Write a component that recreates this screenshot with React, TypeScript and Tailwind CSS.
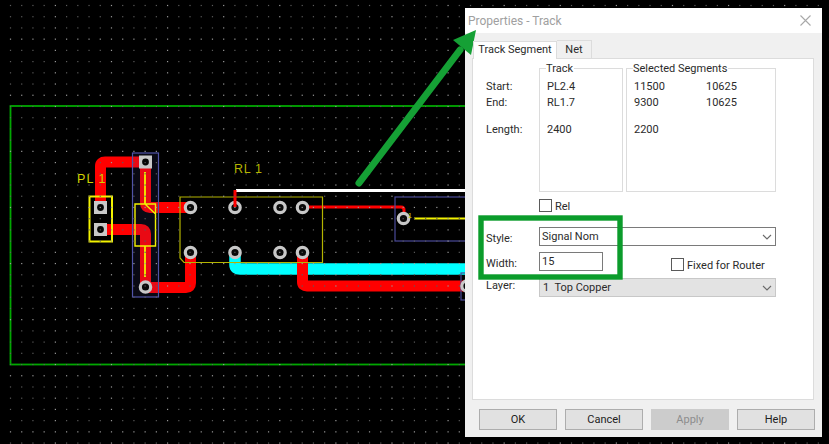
const xs = Array.from({ length: 75 }, (_, i) => i);
const ys = Array.from({ length: 40 }, (_, i) => i);

function Pad({ x, y }: { x: number; y: number }) {
  return (
    <g>
      <circle cx={x} cy={y} r={5.2} fill="#0a0a0a" stroke="#c8c8c8" strokeWidth={3.2} />
    </g>
  );
}

function SquarePad({ x, y }: { x: number; y: number }) {
  return (
    <g>
      <rect x={x - 6.5} y={y - 6.5} width={13} height={13} fill="#c8c8c8" />
      <circle cx={x} cy={y} r={3.4} fill="#050505" />
    </g>
  );
}

function Board() {
  return (
    <svg className="absolute inset-0" width={829} height={444} viewBox="0 0 829 444">
      <rect x={10.5} y={106} width={470} height={258.5} fill="none" stroke="#00a800" strokeWidth={1.8} />
      <g fill="none" strokeLinejoin="round" strokeLinecap="round">
        <path d="M235 252V265Q235 269 240 269H480" stroke="#00ffff" strokeWidth={11.5} />
        <path d="M100.5 207V166Q100.5 162 105 162H145.5V203Q145.5 207.500 150 207.500H190" stroke="#ff0000" strokeWidth={11} />
        <path d="M100.500 229.500H141Q145.500 229.500 145.500 234V287.500H186Q190.500 287.500 190.500 283V252" stroke="#ff0000" strokeWidth={11} />
        <path d="M302.500 252V282Q302.500 286 307 286H480" stroke="#ff0000" strokeWidth={11} />
        <path d="M236 190.500H480" stroke="#ffffff" strokeWidth={3} strokeLinecap="butt" />
        <path d="M302.500 207H401Q404 207 404 210V218" stroke="#ff0000" strokeWidth={3} strokeLinecap="butt" />
      </g>
      <rect x={132.500} y={153} width={26} height={144} fill="#4a4ea8" fillOpacity={0.12} stroke="#5054a8" strokeWidth={1.2} />
      <rect x={395} y={197} width={90} height={44} fill="none" stroke="#4a4a98" strokeWidth={1.2} />
      <rect x={461} y={273} width={20} height={27} fill="none" stroke="#4a4a98" strokeWidth={1.2} />
      <path d="M180 197H322.500V262.500H184L180 258Z" fill="none" stroke="#b4b400" strokeWidth={1.2} />
      <rect x={89.500} y={196.500} width={22.500} height={45} fill="none" stroke="#f2f200" strokeWidth={2} />
      <path d="M135 204H155.500V246H135ZM145 204L155.500 214" fill="none" stroke="#f2f200" strokeWidth={1.4} />
      <path d="M145 172V204M145 246V277" fill="none" stroke="#f2f200" strokeWidth={1.8} />
      <path d="M414 218.500H480" fill="none" stroke="#f2f200" strokeWidth={2} />
      <SquarePad x={100.5} y={207.5} />
      <SquarePad x={100.5} y={229.5} />
      <SquarePad x={145.5} y={162} />
      <Pad x={145.5} y={287} />
      {[190.5, 235, 280, 302.5].map((x) => (
        <g key={x}>
          <Pad x={x} y={207.500} />
          <Pad x={x} y={252.500} />
        </g>
      ))}
      <path d="M235 190V207" stroke="#ff0000" strokeWidth={3} fill="none" />
      <Pad x={403.5} y={218.5} />
      <circle cx={467} cy={286} r={5.200} fill="#0a0a0a" stroke="#c8c8c8" strokeWidth={3.2} />
      <text x={77} y={183} fill="#d2d200" fontFamily="Liberation Sans, sans-serif" fontSize={12.5} letterSpacing={1.1}>PL 1</text>
      <text x={234} y={173} fill="#b4b400" fontFamily="Liberation Sans, sans-serif" fontSize={12.5} letterSpacing={0.7}>RL 1</text>
      <text x={408} y={218} fill="#d2d200" fontFamily="Liberation Sans, sans-serif" fontSize={7}>1</text>
      {ys.map((r) =>
        xs.map((c) => {
          const bright = c % 5 === 4 || r % 5 === 3;
          return (
            <rect
              key={`${r}-${c}`}
              x={10.5 + c * 11.22 - 0.6}
              y={5.5 + r * 11.22 - 0.6}
              width={1.2}
              height={1.2}
              fill={bright ? "#9a9a9a" : "#5c5c5c"}
            />
          );
        })
      )}
    </svg>
  );
}

function Chevron() {
  return (
    <svg width={10} height={6} viewBox="0 0 10 6" className="mr-[3px]">
      <path d="M1 1L5 5L9 1" fill="none" stroke="#6a6a6a" strokeWidth={1.1} />
    </svg>
  );
}

function Group({ title, width, children }: { title: string; width: string; children: React.ReactNode }) {
  return (
    <div className={`relative h-[124px] border border-[#dcdcdc] pt-[10px] pl-[7px] ${width}`}>
      <span className="absolute -top-[8px] left-[6px] bg-[#ffffff] pr-px leading-4">{title}</span>
      {children}
    </div>
  );
}

function Check({ label, className }: { label: string; className?: string }) {
  return (
    <div className={`flex h-[13px] items-center gap-[3px] leading-[13px] ${className ?? ""}`}>
      <span className="h-[13px] w-[13px] border border-[#5a5a5a] bg-white" />
      <span className="pt-px">{label}</span>
    </div>
  );
}

function Btn({ label, disabled }: { label: string; disabled?: boolean }) {
  return (
    <div
      className={`flex h-[21px] w-[78px] items-center justify-center border pt-px ${
        disabled ? "border-[#cccccc] bg-[#cccccc] text-[#8c8c8c]" : "border-[#adadad] bg-[#e1e1e1] text-[#222222]"
      }`}
    >
      {label}
    </div>
  );
}

function Dialog() {
  return (
    <div className="absolute left-[465px] top-[8px] flex h-[429px] w-[357px] flex-col bg-[#f0f0f0] text-[11px] text-[#2b2b2b] [font-family:'Roboto',sans-serif]">
      <div className="flex h-[25px] items-center justify-between bg-white pl-[3px] pr-[11px] text-[12px] text-[#a0a0a0]">
        <span>Properties - Track</span>
        <svg width={11} height={11} viewBox="0 0 11 11">
          <path d="M0.500 0.500L10.500 10.500M10.500 0.500L0.500 10.500" stroke="#a8a8a8" strokeWidth={1.1} />
        </svg>
      </div>
      <div className="flex h-[25px] items-end pl-[8px]">
        <div className="z-10 -mb-px flex h-[18px] w-[84px] items-center justify-center border border-b-0 border-[#dcdcdc] bg-white">
          Track Segment
        </div>
        <div className="flex h-[18px] w-[35px] items-center justify-center border border-l-0 border-b-0 border-[#dcdcdc] bg-[#f0f0f0] pt-px">
          Net
        </div>
      </div>
      <div className="ml-[7px] flex h-[342px] w-[342px] flex-col border border-[#dcdcdc] bg-white pl-[13px]">
        <div className="mt-[9px] flex">
          <div className="w-[53px] pt-[11px] leading-4">
            <div>Start:</div>
            <div>End:</div>
            <div className="mt-[11px]">Length:</div>
          </div>
          <Group title="Track" width="w-[84px]">
            <div className="leading-4">
              <div>PL2.4</div>
              <div>RL1.7</div>
              <div className="mt-[11px]">2400</div>
            </div>
          </Group>
          <Group title="Selected Segments" width="ml-[3px] w-[150px]">
            <div className="grid grid-cols-[72px_1fr] leading-4">
              <div>11500</div>
              <div>10625</div>
              <div>9300</div>
              <div>10625</div>
              <div className="mt-[11px]">2200</div>
            </div>
          </Group>
        </div>
        <Check label="Rel" className="ml-[53px] mt-[7px]" />
        <div className="mt-[15px] flex h-[19px] items-center leading-4">
          <div className="w-[53px] translate-y-[2px]">Style:</div>
          <div className="flex h-[19px] w-[237px] items-center justify-between border border-[#7a7a7a] bg-white pl-[2px]">
            <span>Signal Nom</span>
            <Chevron />
          </div>
        </div>
        <div className="mt-[6px] flex h-[19px] items-center leading-4">
          <div className="w-[53px] translate-y-[2px]">Width:</div>
          <div className="flex h-[19px] w-[64px] items-center border border-[#7a7a7a] bg-white pl-[2px]">15</div>
          <Check label="Fixed for Router" className="ml-[68px] translate-y-[3px]" />
        </div>
        <div className="mt-[7px] flex h-[19px] items-center leading-4">
          <div className="w-[53px] -translate-y-[2px]">Layer:</div>
          <div className="flex h-[19px] w-[237px] items-center justify-between border border-[#c8c8c8] bg-[#e3e3e3] pl-[3px]">
            <span>1&nbsp; Top Copper</span>
            <Chevron />
          </div>
        </div>
      </div>
      <div className="mt-[9px] flex gap-[8px] pl-[14px]">
        <Btn label="OK" />
        <Btn label="Cancel" />
        <Btn label="Apply" disabled />
        <Btn label="Help" />
      </div>
    </div>
  );
}

function Annotations() {
  return (
    <svg className="pointer-events-none absolute inset-0" width={829} height={444} viewBox="0 0 829 444">
      <path d="M359 183L460 50" stroke="#15a035" strokeWidth={7} strokeLinecap="round" fill="none" />
      <path d="M476 30L453 40L471 55Z" fill="#15a035" />
      <rect x={481} y={218} width={139} height={59} fill="none" stroke="#0b9c2b" strokeWidth={5.4} />
    </svg>
  );
}

export default function App() {
  return (
    <div className="relative h-[444px] w-[829px] overflow-hidden bg-black">
      <Board />
      <Dialog />
      <Annotations />
    </div>
  );
}
